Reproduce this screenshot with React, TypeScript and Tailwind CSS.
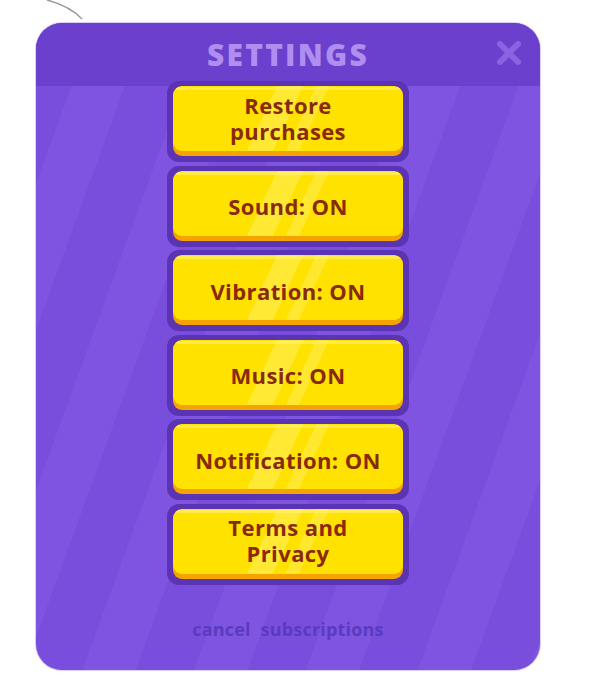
import React from "react";

const items: string[][] = [
  ["Restore", "purchases"],
  ["Sound: ON"],
  ["Vibration: ON"],
  ["Music: ON"],
  ["Notification: ON"],
  ["Terms and", "Privacy"],
];

function YellowButton({ lines }: { lines: string[] }) {
  const multi = lines.length > 1;
  return (
    <div className="h-[81px] w-[242px] rounded-[12px] bg-[#5a34b3] px-[6px] pt-[5px] pb-[6px]">
      <div className="relative h-full w-full overflow-hidden rounded-[9px] bg-[#f5a300]">
        <div className="absolute inset-x-0 top-0 bottom-[5px] rounded-[9px] bg-[#ffe200] bg-[linear-gradient(115deg,transparent_0_40%,rgba(255,246,150,0.35)_40%_50%,transparent_50%_55%,rgba(255,246,150,0.3)_55%_60%,transparent_60%)]" />
        <div className="absolute inset-x-[3px] top-[1px] h-[3px] rounded-full bg-[#fff27a] opacity-60" />
        <div
          className={
            multi
              ? "relative flex h-full items-center justify-center pb-[7px] text-center font-['Open_Sans',sans-serif] text-[22px] font-bold leading-[26px] tracking-[0.4px] text-[#8a2a0c]"
              : "relative flex h-full items-center justify-center pt-[1px] text-center font-['Open_Sans',sans-serif] text-[22px] font-bold leading-[26px] tracking-[0.4px] text-[#8a2a0c]"
          }
        >
          <p>
            {lines.map((l, i) => (
              <React.Fragment key={l}>
                {i > 0 && <br />}
                {l}
              </React.Fragment>
            ))}
          </p>
        </div>
      </div>
    </div>
  );
}

export default function App() {
  return (
    <div className="relative h-[700px] w-[591px] overflow-hidden bg-white">
      <svg className="absolute left-0 top-0" width="100" height="30" viewBox="0 0 100 30">
        <path d="M47 0 Q70 6 82 19" fill="none" stroke="#9a9a9a" strokeWidth="1.4" />
      </svg>
      <div className="pl-[36px] pt-[23px]">
        <div className="flex h-[647px] w-[504px] flex-col overflow-hidden rounded-[26px] bg-[#7a50df] bg-[repeating-linear-gradient(110deg,#794edd_0_55px,#7e54e1_55px_105px)] shadow-[0_0_0_1px_#d9d0f3]">
          <div className="relative flex h-[63px] shrink-0 items-center justify-center bg-[#6b40cc]">
            <span className="font-['Open_Sans',sans-serif] text-[30px] font-extrabold tracking-[2.2px] text-[#b08ef0]">
              SETTINGS
            </span>
            <svg className="absolute right-[18px] top-[17px]" width="26" height="26" viewBox="0 0 26 26">
              <path d="M4 4 L22 22 M22 4 L4 22" stroke="#8a62e2" strokeWidth="6" strokeLinecap="round" />
            </svg>
          </div>
          <div className="relative -mt-[5px] flex flex-col items-center gap-[3.5px]">
            {items.map((l) => (
              <YellowButton key={l.join(" ")} lines={l} />
            ))}
          </div>
          <div className="mt-[31px] flex justify-center font-['Open_Sans',sans-serif] text-[18px] font-bold tracking-[0.2px] text-[#5a3bc0]">
            cancel&nbsp;&nbsp;subscriptions
          </div>
        </div>
      </div>
    </div>
  );
}
